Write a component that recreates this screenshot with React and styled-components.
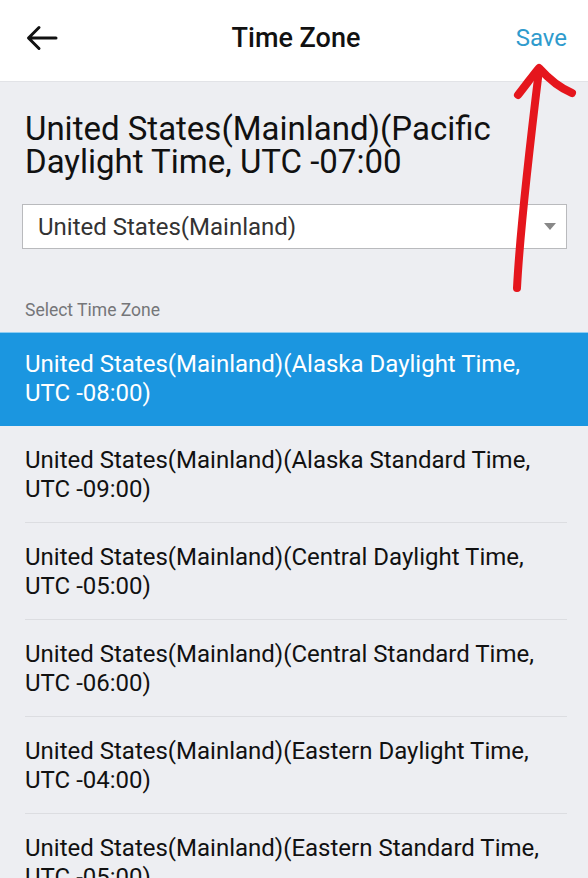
import React from "react";
import styled, { createGlobalStyle } from "styled-components";

const Global = createGlobalStyle`
  html, body { margin: 0; padding: 0; background: #edeef2; }
  body { font-family: Roboto, "Noto Sans", sans-serif; }
  * { box-sizing: border-box; }
`;

const Page = styled.div`
  position: relative;
  width: 588px;
  height: 878px;
  overflow: hidden;
  background: #edeef2;
`;

const Header = styled.header`
  height: 82px;
  background: #fff;
  border-bottom: 1px solid #e2e3e7;
  display: grid;
  grid-template-columns: 90px 1fr 90px;
  align-items: center;
  padding: 0 21px 6px 25px;
`;

const BackBtn = styled.div`
  display: flex;
  align-items: center;
`;

const Title = styled.h1`
  margin: 0;
  text-align: center;
  font-size: 27px;
  font-weight: 500;
  color: #111;
`;

const SaveBtn = styled.div`
  text-align: right;
  font-size: 24px;
  color: #2f9bcd;
`;

const Body = styled.div`
  padding: 30px 21px 0 25px;
`;

const Current = styled.h2`
  margin: 0;
  font-size: 33px;
  line-height: 33px;
  font-weight: 400;
  color: #111;
`;

const Select = styled.div`
  margin: 26px 0 0 -3px;
  height: 45px;
  background: #fff;
  border: 1px solid #b9babd;
  display: flex;
  align-items: center;
  justify-content: space-between;
  padding: 0 10px 0 15px;
  font-size: 24px;
  color: #333;
`;

const Caret = styled.span`
  width: 0;
  height: 0;
  border-left: 6px solid transparent;
  border-right: 6px solid transparent;
  border-top: 7px solid #888;
`;

const Label = styled.div`
  margin-top: 51px;
  font-size: 17.5px;
  color: #757679;
  height: 24px;
`;

const List = styled.ul`
  list-style: none;
  margin: 8px 0 0;
  padding: 0;
`;

const Item = styled.li`
  padding: ${(p) => (p.$selected ? "17px 25px 18px" : "20px 0 18px")};
  margin: ${(p) => (p.$selected ? "0 -21px 0 -25px" : "0")};
  background: ${(p) => (p.$selected ? "#1b96e0" : "transparent")};
  color: ${(p) => (p.$selected ? "#fff" : "#111")};
  border-bottom: ${(p) => (p.$selected ? "none" : "1px solid #dcdde1")};
  border-top: ${(p) => (p.$selected ? "1px solid #8fcdf2" : "none")};
  font-size: 24px;
  line-height: 29px;
`;

const Annotation = styled.svg`
  position: absolute;
  left: 0;
  top: 0;
  pointer-events: none;
`;

const zones = [
  ["Alaska Daylight Time", "-08:00"],
  ["Alaska Standard Time", "-09:00"],
  ["Central Daylight Time", "-05:00"],
  ["Central Standard Time", "-06:00"],
  ["Eastern Daylight Time", "-04:00"],
  ["Eastern Standard Time", "-05:00"],
];

export default function App() {
  return (
    <Page>
      <Global />
      <Header>
        <BackBtn>
          <svg width="34" height="26" viewBox="0 0 34 26" fill="none" stroke="#111" strokeWidth="3" strokeLinecap="round" strokeLinejoin="round">
            <path d="M31 13H4M14 2.5L3.5 13L14 23.5" />
          </svg>
        </BackBtn>
        <Title>Time Zone</Title>
        <SaveBtn>Save</SaveBtn>
      </Header>
      <Body>
        <Current>United States(Mainland)(Pacific Daylight Time, UTC -07:00</Current>
        <Select>
          <span>United States(Mainland)</span>
          <Caret />
        </Select>
        <Label>Select Time Zone</Label>
        <List>
          {zones.map(([name, off], i) => (
            <Item key={i} $selected={i === 0}>
              United States(Mainland)({name},<br />UTC {off})
            </Item>
          ))}
        </List>
      </Body>
      <Annotation width="588" height="878" viewBox="0 0 588 878">
        <g fill="none" stroke="#e5161d" strokeWidth="8" strokeLinecap="round" strokeLinejoin="round">
          <path d="M517 288 C520 230 528 160 539 70" />
          <path d="M518 95 C526 85 533 75 539 68 C548 78 560 88 572 93" />
        </g>
      </Annotation>
    </Page>
  );
}
